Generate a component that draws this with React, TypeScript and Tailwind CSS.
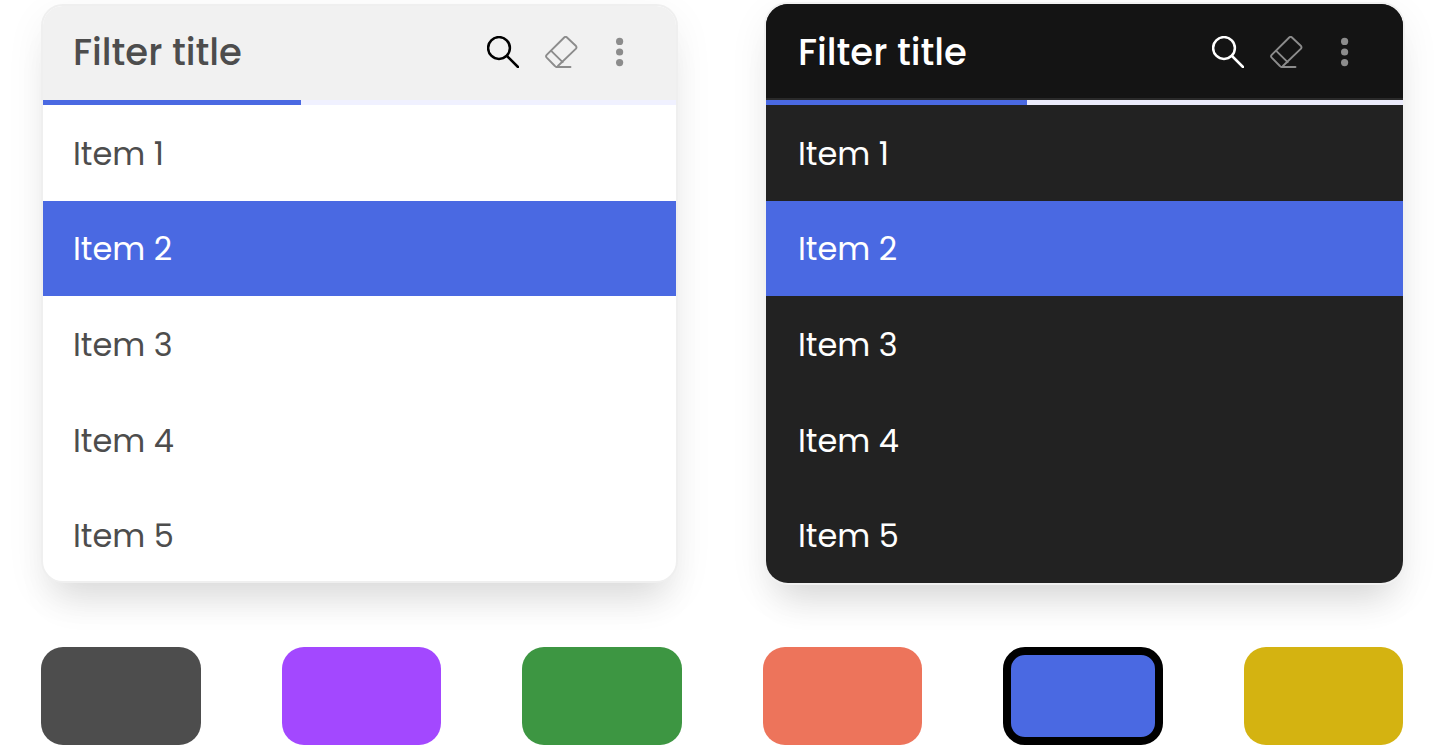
import { useState } from "react";
import clsx from "clsx";

const items = ["Item 1", "Item 2", "Item 3", "Item 4", "Item 5"];

const swatches = [
  { name: "Grey", fill: "bg-[#4d4d4d]" },
  { name: "Purple", fill: "bg-[#a348ff]" },
  { name: "Green", fill: "bg-[#3d9642]" },
  { name: "Coral", fill: "bg-[#ed745b]" },
  { name: "Blue", fill: "bg-[#4a69e2]" },
  { name: "Yellow", fill: "bg-[#d4b311]" },
];

function SearchIcon() {
  return (
    <svg viewBox="0 0 32 32" className="size-8" fill="none" stroke="currentColor" strokeWidth="2.5" strokeLinecap="round" aria-hidden="true">
      <circle cx="12" cy="12" r="10.9" />
      <path d="M20 20 31 31" />
    </svg>
  );
}

function EraserIcon() {
  return (
    <svg viewBox="0 0 33 32" className="h-8 w-[33px]" fill="none" stroke="currentColor" strokeWidth="1.9" strokeLinecap="round" strokeLinejoin="round" aria-hidden="true">
      <path d="M19.2 1.5 1.7 18.9Q.4 20.3 1.7 21.7L9.9 30Q11.4 31.8 12.9 30L31 12.6Q32 11.3 31 10L22 1.5Q20.6 .2 19.2 1.5Z" />
      <path d="M6.2 14.8 17.6 26.2" />
      <path d="M11.6 31H25.5" />
    </svg>
  );
}

function MoreIcon() {
  return (
    <svg viewBox="0 0 32 32" className="size-8" fill="currentColor" aria-hidden="true">
      <circle cx="15.6" cy="5.4" r="3.6" />
      <circle cx="15.6" cy="16" r="3.6" />
      <circle cx="15.6" cy="26.6" r="3.6" />
    </svg>
  );
}

function FilterCard({ dark = false }: { dark?: boolean }) {
  const [selected, setSelected] = useState("Item 2");

  return (
    <section
      className={clsx(
        "flex min-h-[579px] flex-col overflow-hidden rounded-[22px]",
        dark
          ? "bg-[#222222] text-white shadow-[0_0_0_2px_#f1f1f1,0_30px_36px_-14px_rgba(0,0,0,0.11),0_12px_40px_rgba(0,0,0,0.07)]"
          : "border-2 border-[#efefef] bg-white text-[#4d4d4d] shadow-[0_30px_36px_-14px_rgba(0,0,0,0.1),0_12px_40px_rgba(0,0,0,0.06)]",
      )}
    >
      <header
        className={clsx(
          "flex items-center justify-between",
          dark ? "h-24 border-b-2 border-[#2a2a2a] bg-[#141414] pt-0.5 pr-[42px] pl-8" : "h-[94px] bg-[#f1f1f1] pr-10 pb-0.5 pl-[30px]",
        )}
      >
        <h2 className="text-[37px] leading-[48px] font-medium">Filter title</h2>
        <div className="flex items-center gap-[26px]">
          <button type="button" aria-label="Search" className={dark ? "text-white" : "text-black"}>
            <SearchIcon />
          </button>
          <button type="button" aria-label="Clear selection" className="text-[#8c8c8c]">
            <EraserIcon />
          </button>
          <button type="button" aria-label="More options" className="text-[#8c8c8c]">
            <MoreIcon />
          </button>
        </div>
      </header>
      <div className={clsx("h-[5px] shrink-0", dark ? "bg-[#ebebfb]" : "bg-[#f0f1ff]")}>
        <div className={clsx("h-full bg-[#4a69e2]", dark ? "w-[41%]" : "w-[40.8%]")} />
      </div>
      <ul className={clsx("flex flex-1 flex-col", !dark && "-mb-0.5")}>
        {items.map((item) => (
          <li key={item} className="flex flex-1">
            <button
              type="button"
              aria-pressed={selected === item}
              onClick={() => setSelected(item)}
              className={clsx(
                "flex-1 pt-0.5 text-left text-[32px] leading-[48px]",
                dark ? "px-8" : "px-[30px]",
                selected === item && "bg-[#4a69e2] text-white",
              )}
            >
              {item}
            </button>
          </li>
        ))}
      </ul>
    </section>
  );
}

export default function App() {
  const [color, setColor] = useState("Blue");

  return (
    <main className="bg-white pt-1 pr-[43px] pl-[41px] font-['Poppins','Inter',sans-serif]">
      <div className="grid grid-cols-2 gap-[88px]">
        <FilterCard />
        <FilterCard dark />
      </div>
      <div role="radiogroup" aria-label="Accent colour" className="mt-16 grid grid-cols-6 gap-[81px]">
        {swatches.map(({ name, fill }) => (
          <input
            key={name}
            type="radio"
            name="accent"
            aria-label={name}
            checked={color === name}
            onChange={() => setColor(name)}
            className={clsx("h-[98px] w-full cursor-pointer appearance-none rounded-[22px] border-black checked:border-8", fill)}
          />
        ))}
      </div>
    </main>
  );
}
